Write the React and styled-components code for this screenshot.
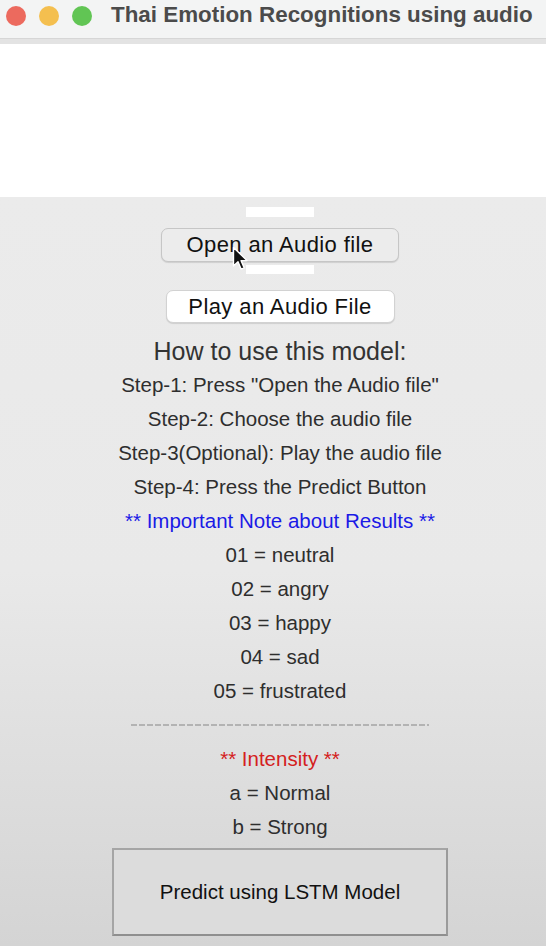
import React from 'react'
import styled, { createGlobalStyle } from 'styled-components'

const GlobalStyle = createGlobalStyle`
  html, body {
    margin: 0;
    padding: 0;
    background: #ffffff;
  }
  body {
    font-family: "Liberation Sans", Arial, sans-serif;
  }
`

const emotions = ['01 = neutral', '02 = angry', '03 = happy', '04 = sad', '05 = frustrated']
const steps = [
  'Step-1: Press "Open the Audio file"',
  'Step-2: Choose the audio file',
  'Step-3(Optional): Play the audio file',
  'Step-4: Press the Predict Button',
]

const Cursor = () => (
  <CursorIcon width="18" height="26" viewBox="0 0 18 26">
    <path
      d="M1.5 1.5 L1.5 20 L6 15.8 L9.2 23.2 L12.2 21.9 L9.1 14.7 L15 14.5 Z"
      fill="#111"
      stroke="#fff"
      strokeWidth="1.4"
      strokeLinejoin="round"
    />
  </CursorIcon>
)

const App = () => (
  <Window>
    <GlobalStyle />
    <TitleBar>
      <Lights>
        <Light color="#ec6a5e" />
        <Light color="#f4bf4f" />
        <Light color="#61c554" />
      </Lights>
      <Title>Thai Emotion Recognitions using audio</Title>
    </TitleBar>
    <Blank />
    <Panel>
      <WhiteBar />
      <ButtonWrap>
        <MacButton>Open an Audio file</MacButton>
        <Cursor />
      </ButtonWrap>
      <WhiteBar second />
      <MacButton primary>Play an Audio File</MacButton>
      <Lines>
        <Heading>How to use this model:</Heading>
        {steps.map(s => (
          <Line key={s}>{s}</Line>
        ))}
        <Line color="#1a1ae6">** Important Note about Results **</Line>
        {emotions.map(e => (
          <Line key={e}>{e}</Line>
        ))}
        <Line>
          <Dashes />
        </Line>
        <Line color="#d42020">** Intensity **</Line>
        <Line>a = Normal</Line>
        <Line>b = Strong</Line>
      </Lines>
      <PredictButton>Predict using LSTM Model</PredictButton>
    </Panel>
  </Window>
)

const Window = styled.div`
  width: 546px;
  height: 946px;
  display: flex;
  flex-direction: column;
  overflow: hidden;
`

const TitleBar = styled.div`
  height: 39px;
  flex-shrink: 0;
  display: flex;
  align-items: center;
  background: #f3f4f4;
  border-bottom: 5px solid #e3e3e3;
  box-shadow: inset 0 -1px 0 #d6d6d6;
  padding-left: 6px;
  gap: 19px;
`

const Lights = styled.div`
  display: flex;
  gap: 13px;
  margin-top: -8px;
`

const Light = styled.span`
  width: 20px;
  height: 20px;
  border-radius: 50%;
  background: ${p => p.color};
`

const Title = styled.div`
  font-size: 22.4px;
  font-weight: bold;
  color: #4b4b4b;
  margin-top: -9px;
  white-space: nowrap;
`

const Blank = styled.div`
  height: 153px;
  background: #ffffff;
  flex-shrink: 0;
`

const Panel = styled.div`
  flex: 1;
  display: flex;
  flex-direction: column;
  align-items: center;
  padding-top: 10px;
  padding-left: 14px;
  background: linear-gradient(#ebebeb 0%, #e9e9e9 50%, #d4d4d4 100%);
`

const WhiteBar = styled.div`
  width: 68px;
  height: ${p => (p.second ? 9 : 10)}px;
  background: #ffffff;
  margin-top: ${p => (p.second ? 3 : 0)}px;
  margin-bottom: ${p => (p.second ? 16 : 11)}px;
`

const ButtonWrap = styled.div`
  position: relative;
`

const MacButton = styled.div`
  width: ${p => (p.primary ? 227 : 236)}px;
  height: ${p => (p.primary ? 31 : 32)}px;
  display: flex;
  align-items: center;
  justify-content: center;
  font-size: 22px;
  letter-spacing: 0.4px;
  color: #111;
  background: ${p => (p.primary ? '#ffffff' : '#ececec')};
  border: 1px solid ${p => (p.primary ? '#d2d2d2' : '#c6c6c6')};
  border-radius: 7px;
  box-shadow: 0 1px 1px rgba(0, 0, 0, 0.12);
`

const CursorIcon = styled.svg`
  position: absolute;
  left: 71px;
  top: 18px;
`

const Lines = styled.div`
  display: flex;
  flex-direction: column;
  align-items: center;
  margin-top: 11px;
`

const Heading = styled.div`
  height: 34px;
  line-height: 34px;
  font-size: 25px;
  color: #333;
`

const Line = styled.div`
  height: 34px;
  line-height: 34px;
  font-size: 20.5px;
  color: ${p => p.color || '#2e2e2e'};
  display: flex;
  align-items: center;
  white-space: nowrap;
`

const Dashes = styled.span`
  display: block;
  width: 298px;
  height: 2px;
  background: repeating-linear-gradient(90deg, #b3b3b3 0 6px, transparent 6px 8px);
`

const PredictButton = styled.div`
  margin-top: 4px;
  width: 332px;
  height: 84px;
  display: flex;
  align-items: center;
  justify-content: center;
  font-size: 20.5px;
  color: #111;
  background: #dcdcdc;
  border: 2px solid #9b9b9b;
  border-color: #a5a5a5 #9b9b9b #8f8f8f #a5a5a5;
`

export default App
